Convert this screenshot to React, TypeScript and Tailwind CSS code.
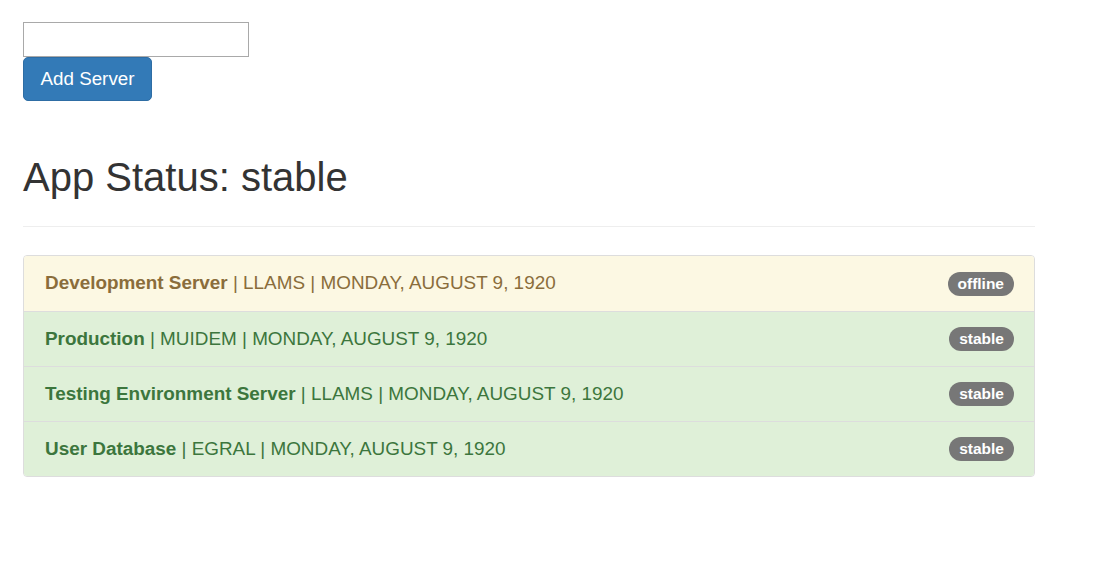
import { useState } from "react";

type Server = { name: string; owner: string; date: string; status: "offline" | "stable" };

const SERVERS: Server[] = [
  { name: "Development Server", owner: "LLAMS", date: "MONDAY, AUGUST 9, 1920", status: "offline" },
  { name: "Production", owner: "MUIDEM", date: "MONDAY, AUGUST 9, 1920", status: "stable" },
  { name: "Testing Environment Server", owner: "LLAMS", date: "MONDAY, AUGUST 9, 1920", status: "stable" },
  { name: "User Database", owner: "EGRAL", date: "MONDAY, AUGUST 9, 1920", status: "stable" },
];

export default function App() {
  const [name, setName] = useState("");

  return (
    <div
      className="min-h-[569px] bg-white px-[23px] pt-[22px] text-[#333]"
      style={{ fontFamily: '"Liberation Sans", Arial, sans-serif' }}
    >
      <input
        value={name}
        onChange={(e) => setName(e.target.value)}
        className="block h-[35px] w-[226px] border border-[#a9a9a9] bg-white px-1 text-[15px] outline-none"
      />
      <button className="block h-[44px] w-[129px] rounded-[5px] border border-[#2e6da4] bg-[#337ab7] text-[18.8px] text-white">
        Add Server
      </button>

      <h1 className="mt-[54px] text-[40px] leading-[44px] font-normal">App Status: stable</h1>
      <hr className="mt-[27px] w-[1012px] border-t border-[#eee]" />

      <div className="mt-[28px] w-[1012px] overflow-hidden rounded-[4px] border border-[#ddd]">
        {SERVERS.map((s, i) => {
          const warn = s.status === "offline";
          return (
            <div
              key={s.name}
              className={
                "flex h-[55px] items-center justify-between pl-[21px] pr-[20px] text-[18.9px] " +
                (i > 0 ? "border-t border-[#ddd] " : "") +
                (warn ? "bg-[#fcf8e3] text-[#8a6d3b]" : "bg-[#dff0d8] text-[#3c763d]")
              }
            >
              <span>
                <b className="font-bold">{s.name}</b> | {s.owner} | {s.date}
              </span>
              <span className="flex h-[24px] items-center rounded-full bg-[#777] px-[10px] text-[15.5px] font-bold text-white">
                {s.status}
              </span>
            </div>
          );
        })}
      </div>
    </div>
  );
}
